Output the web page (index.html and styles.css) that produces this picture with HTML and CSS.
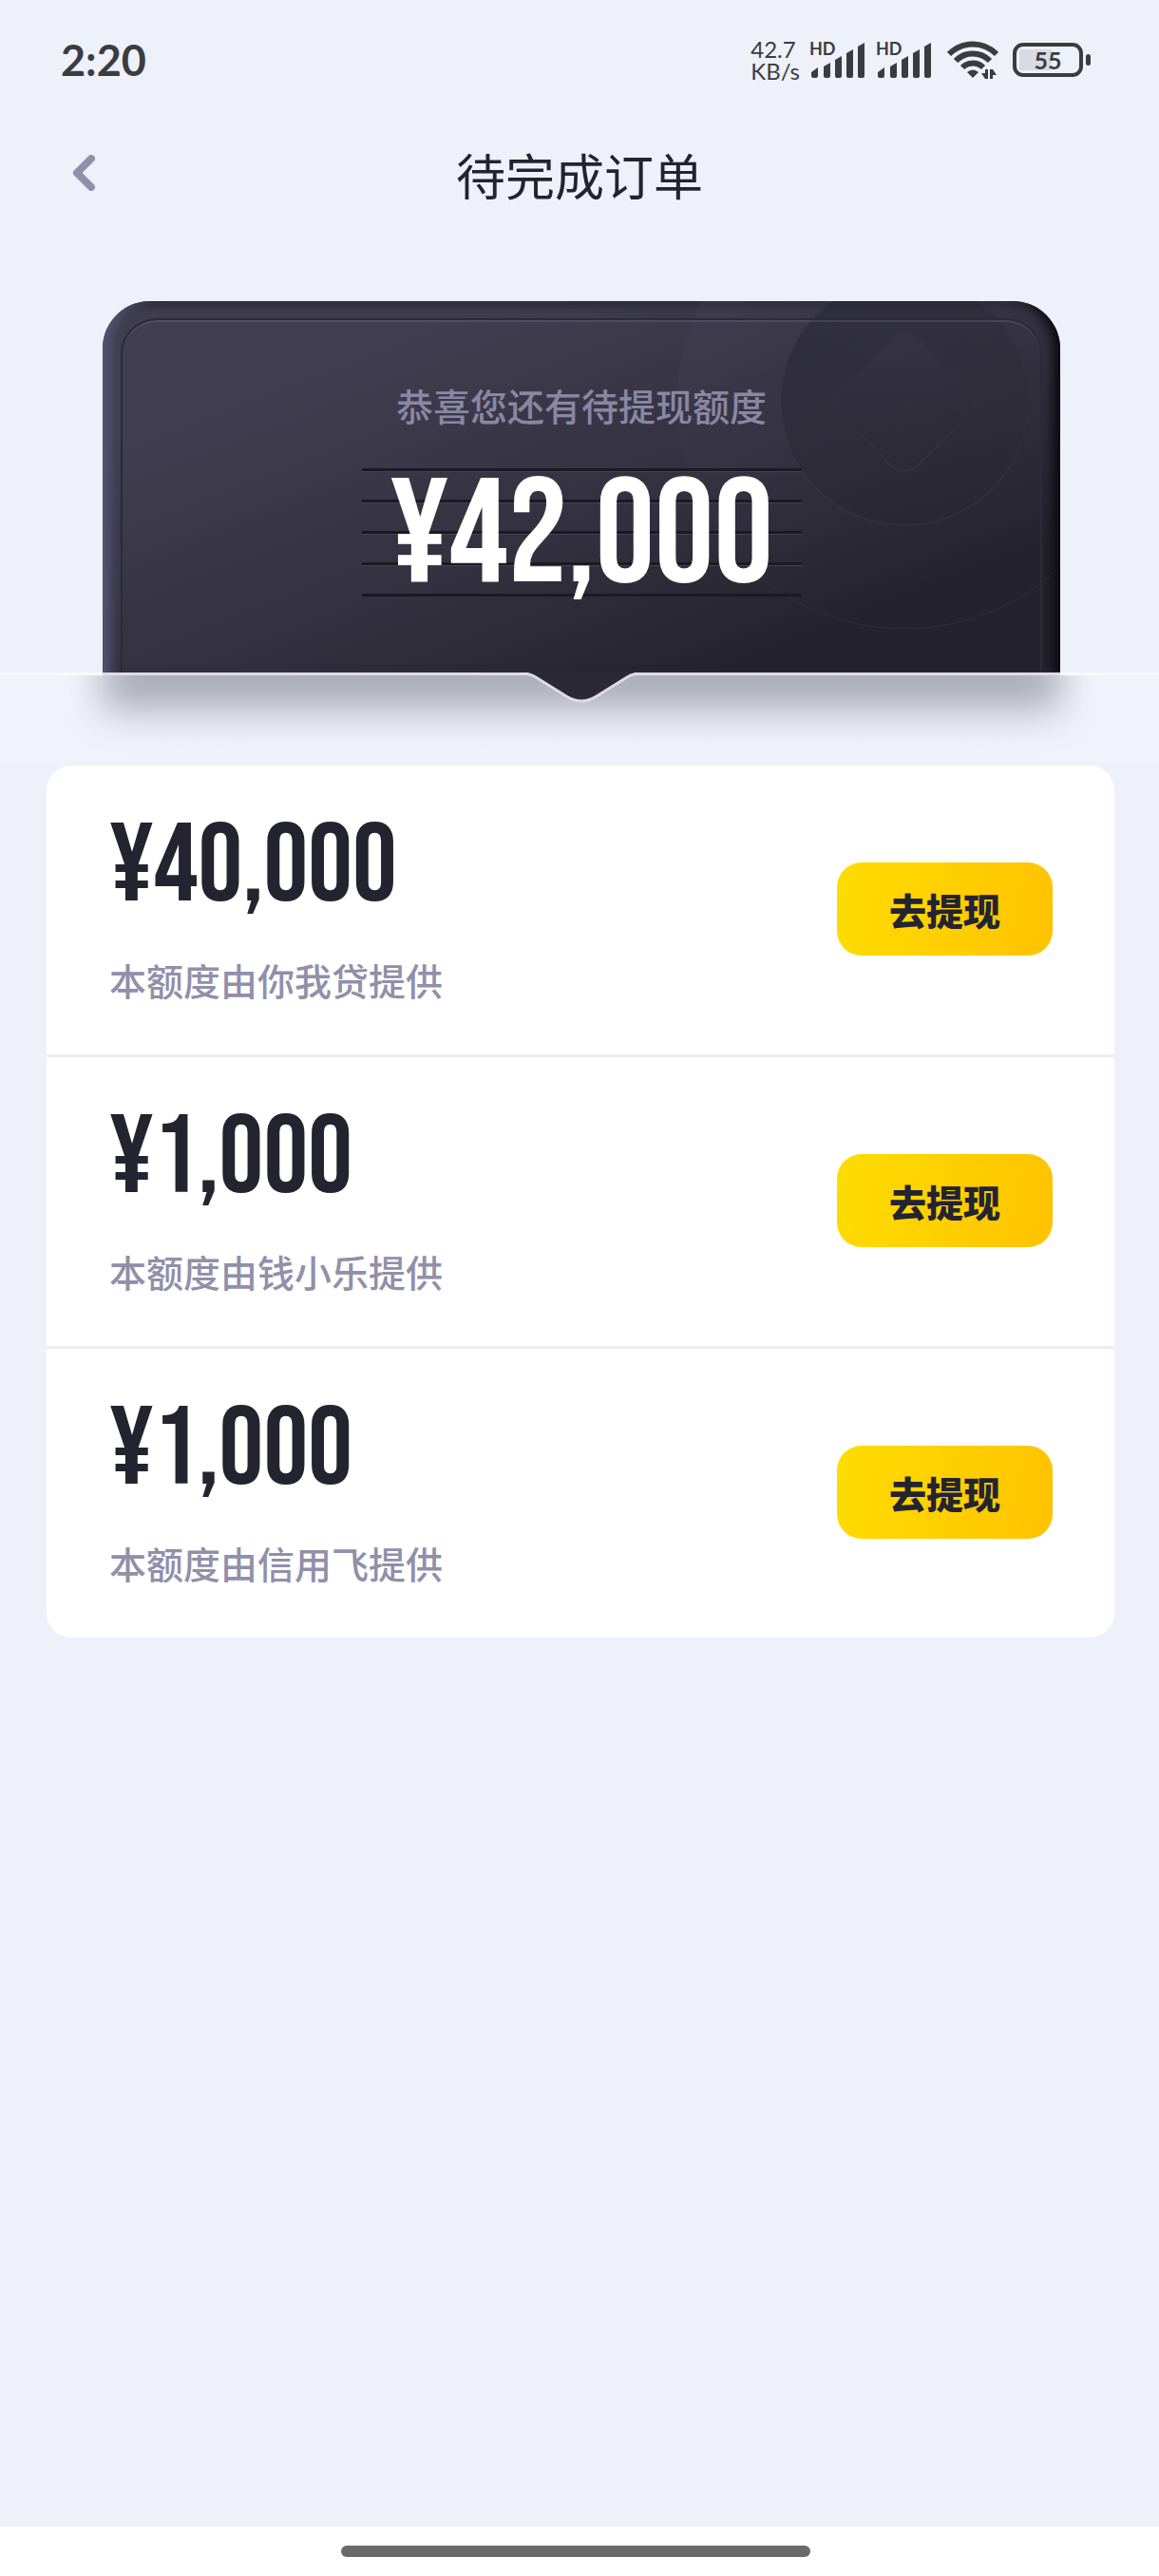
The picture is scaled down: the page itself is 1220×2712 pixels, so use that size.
FILE: index.html
```html
<!DOCTYPE html>
<html lang="zh">
<head>
    <title>待完成订单</title>
    <meta charset="utf-8" />
    <meta name="viewport" content="width=device-width, initial-scale=1">
    <link rel="stylesheet" href="styles.css">
</head>

<body>

<div class="status">
    <span class="status-time">2:20</span>
    <div class="status-icons">
        <div class="net">42.7<br>KB/s</div>
        <svg class="signal" width="60" height="48" viewBox="0 -4 60 48">
            <text x="0" y="15">HD</text>
            <path d="M2 37v-4l7-5v9a2 2 0 0 1-2 2H4a2 2 0 0 1-2-2zM15 27l7-4v14a2 2 0 0 1-2 2h-3a2 2 0 0 1-2-2zM27 20l7-4v21a2 2 0 0 1-2 2h-3a2 2 0 0 1-2-2zM39 13l7-4v28a2 2 0 0 1-2 2h-3a2 2 0 0 1-2-2zM51 6l7-4v35a2 2 0 0 1-2 2h-3a2 2 0 0 1-2-2z"/>
        </svg>
        <svg class="signal" width="60" height="48" viewBox="0 -4 60 48">
            <text x="0" y="15">HD</text>
            <path d="M2 37v-4l7-5v9a2 2 0 0 1-2 2H4a2 2 0 0 1-2-2zM15 27l7-4v14a2 2 0 0 1-2 2h-3a2 2 0 0 1-2-2zM27 20l7-4v21a2 2 0 0 1-2 2h-3a2 2 0 0 1-2-2zM39 13l7-4v28a2 2 0 0 1-2 2h-3a2 2 0 0 1-2-2zM51 6l7-4v35a2 2 0 0 1-2 2h-3a2 2 0 0 1-2-2z"/>
        </svg>
        <svg class="wifi" width="54" height="40" viewBox="0 0 54 40">
            <g fill="none" stroke="#3b3c42" stroke-width="6">
                <path d="M2 14C16 0 38 0 52 14"/>
                <path d="M9 21C19 11 35 11 45 21"/>
                <path d="M16 28C22 22 32 22 38 28"/>
            </g>
            <path d="M21 33q6-5 12 0l-6 6z"/>
            <path d="M43 30v10h-3l-4-6h4v-4zM45 40V30h3l4 6h-4v4z"/>
        </svg>
        <div class="battery"><span>55</span></div>
    </div>
</div>

<header class="bar">
    <button class="back" aria-label="返回">
        <svg width="24" height="38" viewBox="0 0 24 38">
            <path d="M20 4L5 19l15 15" fill="none" stroke="#918faa" stroke-width="8" stroke-linecap="round" stroke-linejoin="round"/>
        </svg>
    </button>
    <h1>待完成订单</h1>
</header>

<section class="ticket">
    <svg class="ticket-art" width="403" height="391" viewBox="0 0 403 391">
        <defs>
            <linearGradient id="ring" x1="0" y1="0" x2="1" y2="1">
                <stop offset="0" stop-color="#504e66" stop-opacity=".18"/>
                <stop offset=".6" stop-color="#504e66" stop-opacity="0"/>
            </linearGradient>
            <linearGradient id="disc" x1="0" y1="0" x2="1" y2="1">
                <stop offset="0" stop-color="#1d1c26" stop-opacity=".4"/>
                <stop offset="1" stop-color="#1d1c26" stop-opacity="0"/>
            </linearGradient>
            <linearGradient id="gem" x1="0" y1="0" x2="0" y2="1">
                <stop offset="0" stop-color="#3d3b50" stop-opacity=".3"/>
                <stop offset=".6" stop-color="#3d3b50" stop-opacity="0"/>
            </linearGradient>
            <linearGradient id="line" x1="0" y1="0" x2="0" y2="1">
                <stop offset=".3" stop-color="#3f3e4c" stop-opacity="0"/>
                <stop offset="1" stop-color="#3f3e4c" stop-opacity=".35"/>
            </linearGradient>
        </defs>
        <circle cx="239" cy="106" r="239" fill="url(#ring)" stroke="url(#line)"/>
        <circle cx="239" cy="106" r="130" fill="url(#disc)" stroke="url(#line)" stroke-width="2"/>
        <path d="M225 39q14-12 28 0l55 55q12 12 0 24l-55 55q-14 12-28 0l-55-55q-12-12 0-24z" fill="url(#gem)" stroke="url(#line)" stroke-width="2"/>
    </svg>
    <div class="ticket-frame"></div>
    <p class="ticket-tip">恭喜您还有待提现额度</p>
    <p class="ticket-sum">¥42,000</p>
    <svg class="ticket-notch" width="124" height="32" viewBox="0 0 124 32">
        <path d="M0 0h124v1Q116 1 110 5L78 25Q62 35 46 25L14 5Q8 1 0 1z" fill="#2b2a34"/>
        <path d="M0 1Q8 1 14 5L46 25Q62 35 78 25L110 5Q116 1 124 1" fill="none" stroke="#dddce7" stroke-width="3"/>
    </svg>
</section>
<div class="shelf"><div class="shelf-shadow"></div></div>

<ul class="list">
    <li>
        <div class="info">
            <p class="sum">¥40,000</p>
            <p class="from">本额度由你我贷提供</p>
        </div>
        <button class="btn">去提现</button>
    </li>
    <li>
        <div class="info">
            <p class="sum">¥1,000</p>
            <p class="from">本额度由钱小乐提供</p>
        </div>
        <button class="btn">去提现</button>
    </li>
    <li>
        <div class="info">
            <p class="sum">¥1,000</p>
            <p class="from">本额度由信用飞提供</p>
        </div>
        <button class="btn">去提现</button>
    </li>
</ul>

<div class="home"><i></i></div>

</body>
</html>
```
FILE: styles.css
```css
*{margin:0;padding:0;box-sizing:border-box;}
li{list-style-type:none;}
button{border:none;background:none;font-family:inherit;cursor:pointer;}

body{min-height:100vh;display:flex;flex-direction:column;overflow-x:hidden;background:#eef1f9;color:#242430;font-family:"Noto Sans CJK SC",sans-serif;}

/* 状态栏 */
.status{height:126px;padding:0 72px 0 64px;display:flex;justify-content:space-between;align-items:center;color:#3b3c42;font-family:Lato,sans-serif;}
.status-time{font-size:45px;line-height:54px;font-weight:bold;}
.status-icons{display:flex;align-items:center;gap:10px;}
.net{font-size:24px;line-height:23px;}
.signal text{font:bold 18px Lato,sans-serif;}
.signal,.wifi{fill:#3b3c42;}
.wifi{margin:0 5px;}
.battery{width:74px;height:36px;margin-right:8px;border:4px solid #3b3c42;border-radius:11px;position:relative;text-align:center;font-size:25px;line-height:28px;background:linear-gradient(#d9dae2,#d9dae2) 3px 3px/34px 22px no-repeat;}
.battery span{font-weight:bold;}
.battery:after{content:"";position:absolute;right:-12px;top:8px;width:5px;height:12px;border-radius:3px;background:#3b3c42;}

/* 标题栏 */
.bar{height:116px;position:relative;display:flex;justify-content:center;align-items:center;}
.bar h1{font-size:52px;line-height:64px;font-weight:400;}
.back{position:absolute;left:53px;top:21px;width:70px;height:70px;display:flex;align-items:center;justify-content:center;}

/* 额度卡 */
.ticket{position:relative;z-index:1;height:394px;margin:75px 104px 0 108px;padding-top:85px;border-bottom:3px solid #dddce7;border-radius:50px 50px 0 0;text-align:center;
    background:linear-gradient(to bottom right,#403e50 20%,#33313f 55%,#24232d 82%);
    box-shadow:inset 14px 0 12px -6px #55556f,inset -14px 0 12px -6px #0d0c14,inset 0 12px 12px -8px #2b2a36;}
.ticket-frame{position:absolute;left:19px;right:19px;top:18px;bottom:0;border:2px solid #2b2a37;border-bottom:none;border-radius:38px 38px 0 0;box-shadow:inset 0 2px 1px rgba(120,118,145,.3);}
.ticket-art{position:absolute;right:0;top:0;border-radius:0 50px 0 0;}
.ticket-tip{position:relative;font-size:39px;line-height:48px;font-weight:500;color:#8a87a3;}
.ticket-sum{position:relative;width:463px;height:135px;margin:43px auto 0;padding-top:11px;font:156px/123px "Bebas Neue","Roboto Condensed",sans-serif;color:#fff;
    background:repeating-linear-gradient(#1b1a24 0,#1b1a24 3px,#444253 3px,#444253 4px,transparent 4px,transparent 33px);}
.ticket-notch{position:absolute;left:50%;bottom:-32px;margin-left:-62px;}

.shelf{height:98px;margin-top:-3px;border-top:3px solid #f7f9fe;overflow:hidden;background:linear-gradient(#f1f4fc,#eff2fb);}
.shelf-shadow{height:66px;margin:-30px 104px 0 108px;background:rgba(70,68,80,.42);filter:blur(20px);}

/* 订单 */
.list{margin:0 47px 0 49px;border-radius:26px;background:#fff;}
.list li{display:flex;justify-content:space-between;align-items:center;padding:49px 65px 51px 66px;}
.list li+li{border-top:3px solid #ededef;}
.sum{font:117px/117px "Bebas Neue","Roboto Condensed",sans-serif;}
.from{margin-top:35px;padding-bottom:4px;font-size:39px;line-height:48px;font-weight:500;color:#918faa;}
.btn{width:227px;height:98px;border-radius:26px;background:linear-gradient(100deg,#fedd00,#ffc200);color:#242430;font-size:39px;line-height:48px;font-weight:900;}

/* 底部横条 */
.home{height:52px;margin-top:auto;padding-right:8px;background:#fff;display:flex;justify-content:center;align-items:center;}
.home i{width:494px;height:12px;border-radius:6px;background:#6a6a6a;}
```
